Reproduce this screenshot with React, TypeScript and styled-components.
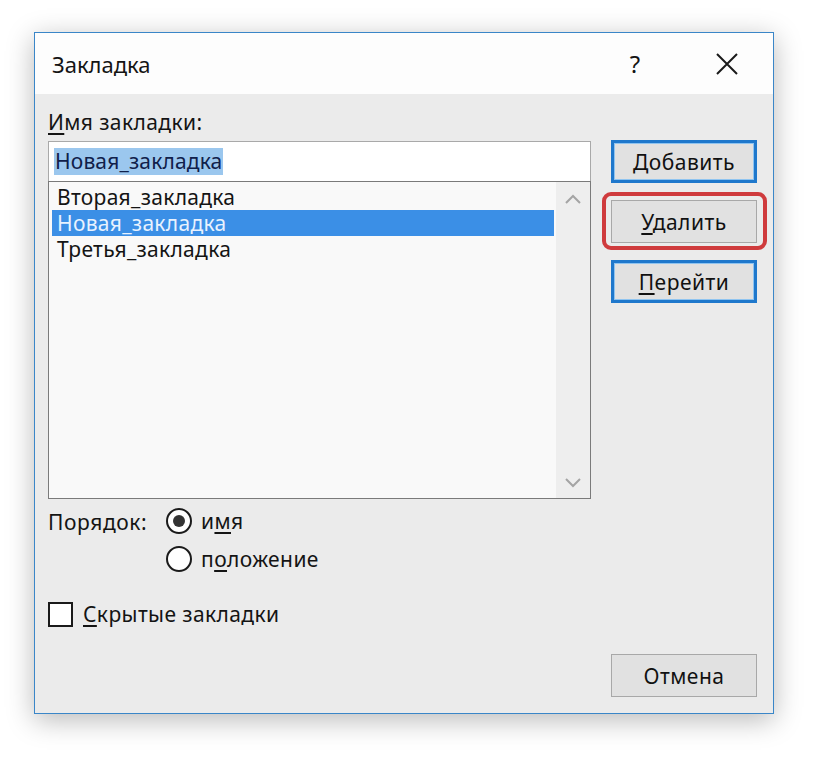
import styled, { createGlobalStyle } from 'styled-components'

const GlobalStyle = createGlobalStyle`
  html, body {
    margin: 0;
    padding: 0;
    background: #ffffff;
  }
  body {
    font-family: "Noto Sans", "Open Sans", "Liberation Sans", sans-serif;
    color: #141414;
  }
`

const Page = styled.div`
  width: 816px;
  height: 758px;
  padding: 32px 0 0 34px;
  box-sizing: border-box;
`

const Window = styled.div`
  width: 740px;
  height: 682px;
  box-sizing: border-box;
  border: 1px solid #3a86c8;
  box-shadow: 0 6px 26px rgba(0, 0, 0, 0.28);
  display: flex;
  flex-direction: column;
  background: #ebebeb;
`

const TitleBar = styled.div`
  height: 61px;
  background: #fdfdfd;
  display: flex;
  align-items: center;
  padding: 0 0 0 17px;
`

const Title = styled.div`
  font-size: 22px;
  flex: 1;
`

const TitleButton = styled.div`
  width: 92px;
  height: 61px;
  display: flex;
  align-items: center;
  justify-content: center;
  font-size: 24px;
`

const Body = styled.div`
  flex: 1;
  display: grid;
  grid-template-columns: 543px 146px;
  column-gap: 20px;
  padding: 14px 15px 16px 13px;
`

const LeftCol = styled.div`
  display: flex;
  flex-direction: column;
`

const RightCol = styled.div`
  display: flex;
  flex-direction: column;
  gap: 17px;
  padding-top: 32px;
`

const Label = styled.div`
  font-size: 21px;
  letter-spacing: 0.4px;
  line-height: 28px;
  margin-bottom: 5px;
`

const Key = styled.span`
  text-decoration: underline;
  text-underline-offset: 3px;
`

const Input = styled.div`
  height: 39px;
  background: #ffffff;
  border: 1px solid #a9a9a9;
  border-bottom: none;
  display: flex;
  align-items: center;
  padding-left: 5px;
`

const Selected = styled.span`
  background: #9bc7ee;
  color: #10204a;
  font-size: 21px;
  letter-spacing: 0.15px;
  line-height: 27px;
  padding: 0 1px;
`

const ListBox = styled.div`
  height: 318px;
  box-sizing: border-box;
  border: 1px solid #7a7a7a;
  background: #f9f9f9;
  display: flex;
`

const Items = styled.div`
  flex: 1;
  padding: 2px 2px 0 3px;
`

const Item = styled.div<{ $active?: boolean }>`
  height: 26px;
  line-height: 26px;
  font-size: 21px;
  letter-spacing: 0.3px;
  padding-left: 5px;
  background: ${p => (p.$active ? '#3b8fe6' : 'transparent')};
  color: ${p => (p.$active ? '#e8f2ff' : '#141414')};
`

const ScrollBar = styled.div`
  width: 34px;
  background: #eeeeee;
  display: flex;
  flex-direction: column;
  justify-content: space-between;
  align-items: center;
  padding: 12px 0 10px;
`

const OrderRow = styled.div`
  display: flex;
  margin-top: 8px;
`

const OrderLabel = styled.div`
  width: 118px;
  font-size: 21px;
  letter-spacing: 0.6px;
  line-height: 28px;
  padding-top: 1px;
`

const RadioGroup = styled.div`
  display: flex;
  flex-direction: column;
  gap: 10px;
`

const RadioRow = styled.label`
  display: flex;
  align-items: center;
  gap: 9px;
  font-size: 21px;
  letter-spacing: 0.4px;
  line-height: 28px;
`

const RadioCircle = styled.span<{ $checked?: boolean }>`
  width: 26px;
  height: 26px;
  box-sizing: border-box;
  border-radius: 50%;
  border: 2px solid #1a1a1a;
  background: #ffffff;
  display: flex;
  align-items: center;
  justify-content: center;
  &::after {
    content: '';
    width: 12px;
    height: 12px;
    border-radius: 50%;
    background: ${p => (p.$checked ? '#333333' : 'transparent')};
  }
`

const CheckRow = styled.label`
  display: flex;
  align-items: center;
  gap: 10px;
  font-size: 21px;
  letter-spacing: 0.4px;
  line-height: 28px;
  margin-top: 27px;
`

const CheckBox = styled.span`
  width: 25px;
  height: 25px;
  box-sizing: border-box;
  border: 2px solid #1a1a1a;
  background: #ffffff;
`

const Button = styled.div<{ $default?: boolean }>`
  width: 146px;
  height: 43px;
  box-sizing: border-box;
  background: #e1e1e1;
  border: ${p => (p.$default ? '3px solid #1f78cc' : '1px solid #a8a8a8')};
  box-shadow: ${p => (p.$default ? 'inset 0 0 0 1px #8fc4f0' : 'none')};
  display: flex;
  align-items: center;
  justify-content: center;
  font-size: 21px;
  letter-spacing: 0.5px;
  color: #111111;
`

const Highlight = styled.div`
  position: relative;
  &::after {
    content: '';
    position: absolute;
    left: -9px;
    right: -10px;
    top: -8px;
    bottom: -7px;
    border: 4px solid #cf3b3d;
    border-radius: 9px;
    pointer-events: none;
  }
`

const Spacer = styled.div`
  flex: 1;
`

const Chevron = ({ up }: { up?: boolean }) => (
  <svg width="16" height="10" viewBox="0 0 16 10">
    <path
      d={up ? 'M1 9 L8 2 L15 9' : 'M1 1 L8 8 L15 1'}
      fill="none"
      stroke="#a4a4a4"
      strokeWidth="2"
    />
  </svg>
)

const CloseIcon = () => (
  <svg width="22" height="22" viewBox="0 0 22 22">
    <path d="M1 1 L21 21 M21 1 L1 21" stroke="#1a1a1a" strokeWidth="2" />
  </svg>
)

export default function App() {
  return (
    <>
      <GlobalStyle />
      <Page>
        <Window>
          <TitleBar>
            <Title>Закладка</Title>
            <TitleButton>?</TitleButton>
            <TitleButton>
              <CloseIcon />
            </TitleButton>
          </TitleBar>
          <Body>
            <LeftCol>
              <Label>
                <Key>И</Key>мя закладки:
              </Label>
              <Input>
                <Selected>Новая_закладка</Selected>
              </Input>
              <ListBox>
                <Items>
                  <Item>Вторая_закладка</Item>
                  <Item $active>Новая_закладка</Item>
                  <Item>Третья_закладка</Item>
                </Items>
                <ScrollBar>
                  <Chevron up />
                  <Chevron />
                </ScrollBar>
              </ListBox>
              <OrderRow>
                <OrderLabel>Порядок:</OrderLabel>
                <RadioGroup>
                  <RadioRow>
                    <RadioCircle $checked />
                    <span>
                      и<Key>м</Key>я
                    </span>
                  </RadioRow>
                  <RadioRow>
                    <RadioCircle />
                    <span>
                      п<Key>о</Key>ложение
                    </span>
                  </RadioRow>
                </RadioGroup>
              </OrderRow>
              <CheckRow>
                <CheckBox />
                <span>
                  <Key>С</Key>крытые закладки
                </span>
              </CheckRow>
            </LeftCol>
            <RightCol>
              <Button $default>
                <span>
                  <Key>Д</Key>обавить
                </span>
              </Button>
              <Highlight>
                <Button>
                  <span>
                    <Key>У</Key>далить
                  </span>
                </Button>
              </Highlight>
              <Button $default>
                <span>
                  <Key>П</Key>ерейти
                </span>
              </Button>
              <Spacer />
              <Button>Отмена</Button>
            </RightCol>
          </Body>
        </Window>
      </Page>
    </>
  )
}
